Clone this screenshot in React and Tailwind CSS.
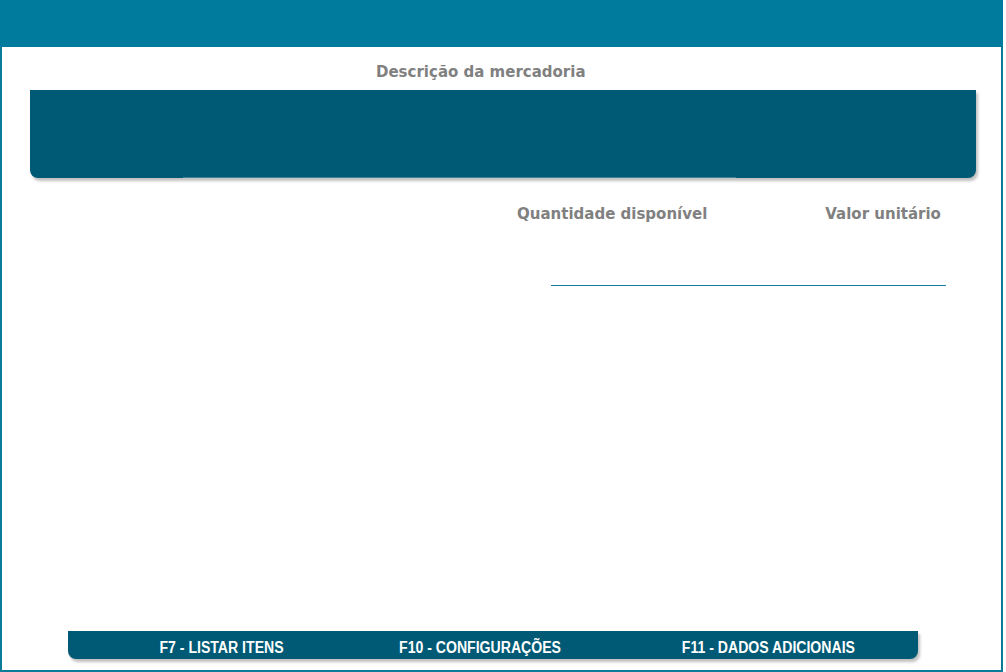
export default function App() {
	return (
		<div className="w-[1003px] h-[672px] flex flex-col bg-white border-x-2 border-b-2 border-[#0b7b99]" style={{ fontFamily: "'DejaVu Sans', Verdana, sans-serif" }}>
			{/* Top bar */}
			<div className="h-[47px] -mx-[2px] bg-[#007b9d] shrink-0" />

			{/* Descrição */}
			<div className="mt-[14px] pl-[374px] h-[22px] text-[15px] font-bold text-[#808080] leading-[22px]">Descrição da mercadoria</div>
			<div className="mt-[7px] ml-[28px] w-[946px] h-[88px] bg-[#005a75] rounded-b-lg shadow-[2px_3px_3px_rgba(0,0,0,0.25)] relative">
				<div className="absolute bottom-0 left-[153px] w-[553px] h-px bg-[#3f8399]" />
			</div>

			{/* Quantidade / Valor */}
			<div className="mt-[25px] flex text-[15px] font-bold text-[#808080] leading-[22px]">
				<span className="ml-[515px]">Quantidade disponível</span>
				<span className="ml-[118px]">Valor unitário</span>
			</div>
			<div className="mt-[60px] ml-[549px] w-[395px] border-t border-[#137c9b]" />

			<div className="flex-1" />

			{/* Footer */}
			<div
				className="mb-[11px] ml-[66px] w-[850px] h-[28px] bg-[#005a75] rounded-b-lg shadow-[2px_3px_3px_rgba(0,0,0,0.25)] flex items-center text-white font-bold text-[16px] pt-[5px]"
				style={{ fontFamily: "'Liberation Sans', Arial, sans-serif" }}
			>
				<span className="w-[308px] shrink-0 text-center"><span className="inline-block scale-x-[0.88]">F7 - LISTAR ITENS</span></span>
				<span className="w-[208px] shrink-0 text-center"><span className="inline-block scale-x-[0.88]">F10 - CONFIGURAÇÕES</span></span>
				<span className="w-[368px] shrink-0 text-center"><span className="inline-block scale-x-[0.88]">F11 - DADOS ADICIONAIS</span></span>
			</div>
		</div>
	);
}
